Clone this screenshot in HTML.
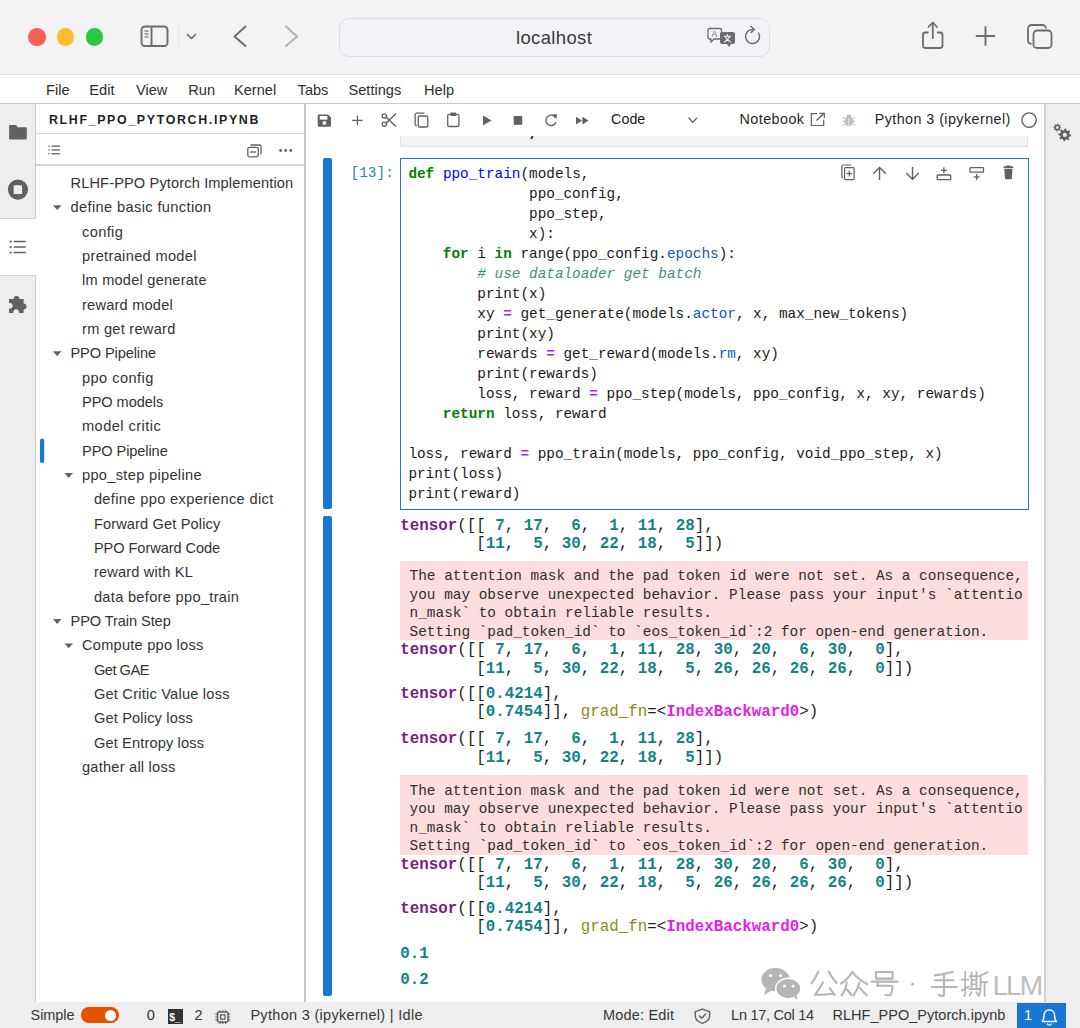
<!DOCTYPE html><html><head><meta charset="utf-8"><style>
*{margin:0;padding:0;box-sizing:border-box}
html,body{width:1080px;height:1028px;overflow:hidden;background:#fff;font-family:"Liberation Sans",sans-serif;color:#1f1f1f}
.a{position:absolute;white-space:pre}
svg{position:absolute;overflow:visible}
.m{font-family:"Liberation Mono",monospace}
.kw{color:#008000;font-weight:bold}
.fn{color:#0000ff}
.pr{color:#0d58b8}
.cm{color:#3f8f80;font-style:italic}
.op{color:#aa22ff;font-weight:bold}
.ten{color:#7d1a8a;font-weight:bold}
.n{color:#128383;font-weight:bold}
.gr{color:#8c8c10}
.mag{color:#e81ee8;font-weight:bold}
</style></head><body>
<div class="a" style="left:0;top:0;width:1080px;height:74px;background:#f3f3f6"></div>
<div class="a" style="left:0;top:73.8px;width:1080px;height:1.4px;background:#dcdce0"></div>
<div class="a" style="left:28.3px;top:28.3px;width:17.4px;height:17.4px;border-radius:50%;background:#fe5f57"></div>
<div class="a" style="left:57.0px;top:28.3px;width:17.4px;height:17.4px;border-radius:50%;background:#febc2e"></div>
<div class="a" style="left:85.7px;top:28.3px;width:17.4px;height:17.4px;border-radius:50%;background:#28c840"></div>
<svg style="left:0;top:0" width="1080" height="74"><rect x="141.5" y="26.5" width="26" height="19.5" rx="3.5" fill="none" stroke="#6c6c70" stroke-width="1.9"/><line x1="151.5" y1="26.5" x2="151.5" y2="46" stroke="#6c6c70" stroke-width="1.9"/><line x1="144.5" y1="31" x2="148.5" y2="31" stroke="#6c6c70" stroke-width="1.2"/><line x1="144.5" y1="34" x2="148.5" y2="34" stroke="#6c6c70" stroke-width="1.2"/><line x1="144.5" y1="37" x2="148.5" y2="37" stroke="#6c6c70" stroke-width="1.2"/><polyline points="187.5,34.5 191.5,38.5 195.5,34.5" fill="none" stroke="#6c6c70" stroke-width="1.7" stroke-linecap="round" stroke-linejoin="round"/><line x1="178.5" y1="24" x2="178.5" y2="52" stroke="#e7e7eb" stroke-width="1"/><polyline points="245.5,26.5 234.5,36.5 245.5,46" fill="none" stroke="#6c6c70" stroke-width="2" stroke-linecap="round" stroke-linejoin="round"/><polyline points="286,26.5 297,36.5 286,46" fill="none" stroke="#b4b4b8" stroke-width="2" stroke-linecap="round" stroke-linejoin="round"/><path d="M928.5,32.5 H925.5 A2.5,2.5 0 0 0 923,35 V45.5 A2.5,2.5 0 0 0 925.5,48 H940 A2.5,2.5 0 0 0 942.5,45.5 V35 A2.5,2.5 0 0 0 940,32.5 H937" fill="none" stroke="#6c6c70" stroke-width="1.8"/><line x1="932.8" y1="23" x2="932.8" y2="39" stroke="#6c6c70" stroke-width="1.8"/><polyline points="928.5,27 932.8,22.5 937,27" fill="none" stroke="#6c6c70" stroke-width="1.8" stroke-linecap="round" stroke-linejoin="round"/><line x1="985.5" y1="27" x2="985.5" y2="45" stroke="#6c6c70" stroke-width="1.9" stroke-linecap="round"/><line x1="976.5" y1="36" x2="994.5" y2="36" stroke="#6c6c70" stroke-width="1.9" stroke-linecap="round"/><path d="M1031.5,44 A3.5,3.5 0 0 1 1028,40.5 V28.5 A3.5,3.5 0 0 1 1031.5,25 H1042.5 A3.5,3.5 0 0 1 1046,28.5" fill="none" stroke="#6c6c70" stroke-width="1.8"/><rect x="1033.5" y="30.5" width="18" height="17.5" rx="3.5" fill="none" stroke="#6c6c70" stroke-width="1.8"/></svg>
<div class="a" style="left:338.5px;top:17.5px;width:431.5px;height:39px;border:1px solid #dcdce0;border-radius:10px;background:#f3f3f7"></div>
<div class="a" style="left:516.0px;top:28.09px;font-size:18.5px;line-height:20px;color:#3a3a3c;letter-spacing:.35px">localhost</div>
<svg style="left:0;top:0" width="1080" height="74"><path d="M709.5,28.5 H720 A1.5,1.5 0 0 1 721.5,30 V37.5 A1.5,1.5 0 0 1 720,39 H714 L711,42 V39 H709.5 A1.5,1.5 0 0 1 708,37.5 V30 A1.5,1.5 0 0 1 709.5,28.5 Z" fill="none" stroke="#6c6c70" stroke-width="1.3"/><text x="711.5" y="37" font-family="Liberation Sans" font-size="8.5" fill="#6c6c70">A</text><path d="M722,32 H733 A2,2 0 0 1 735,34 V42 A2,2 0 0 1 733,44 H731 L729,47 L727,44 H722 A2,2 0 0 1 720,42 V34 A2,2 0 0 1 722,32 Z" fill="#6c6c70"/><path d="M727.5,34.6 V36 M724.3,36.3 H730.7 M725.3,36.5 Q727,40.5 730.6,42 M729.7,36.5 Q728,40.5 724.4,42" fill="none" stroke="#f3f3f7" stroke-width="1.1" stroke-linecap="round"/><path d="M758.6,33 A7,7 0 1 1 752.5,29.5" fill="none" stroke="#6c6c70" stroke-width="1.5" stroke-linecap="round"/><polyline points="751,26.5 754.5,29.5 751,32.5" fill="none" stroke="#6c6c70" stroke-width="1.5" stroke-linecap="round" stroke-linejoin="round"/></svg>
<div class="a" style="left:0;top:75px;width:1080px;height:28px;background:#fff"></div>
<div class="a" style="left:0;top:102.6px;width:1080px;height:1.6px;background:#c8c8c8"></div>
<div class="a" style="left:46.0px;top:79.74px;font-size:14.6px;line-height:20px;color:#2e2e2e;">File</div>
<div class="a" style="left:89.3px;top:79.74px;font-size:14.6px;line-height:20px;color:#2e2e2e;">Edit</div>
<div class="a" style="left:136.0px;top:79.74px;font-size:14.6px;line-height:20px;color:#2e2e2e;">View</div>
<div class="a" style="left:188.3px;top:79.74px;font-size:14.6px;line-height:20px;color:#2e2e2e;">Run</div>
<div class="a" style="left:234.0px;top:79.74px;font-size:14.6px;line-height:20px;color:#2e2e2e;">Kernel</div>
<div class="a" style="left:297.6px;top:79.74px;font-size:14.6px;line-height:20px;color:#2e2e2e;">Tabs</div>
<div class="a" style="left:348.5px;top:79.74px;font-size:14.6px;line-height:20px;color:#2e2e2e;">Settings</div>
<div class="a" style="left:424.0px;top:79.74px;font-size:14.6px;line-height:20px;color:#2e2e2e;">Help</div>
<div class="a" style="left:0;top:104px;width:35px;height:898px;background:#eeeeee"></div>
<div class="a" style="left:35px;top:104px;width:1px;height:114px;background:#c9c9c9"></div>
<div class="a" style="left:35px;top:275px;width:1px;height:727px;background:#c9c9c9"></div>
<div class="a" style="left:0;top:218px;width:35px;height:57px;background:#fff"></div>
<div class="a" style="left:0;top:217.5px;width:36px;height:1px;background:#d0d0d0"></div>
<div class="a" style="left:0;top:275px;width:36px;height:1.2px;background:#cfcfcf"></div>
<svg style="left:0;top:0" width="40" height="330"><path d="M10.3,125.1 H15.6 A1,1 0 0 1 16.5,125.6 L17.6,127.3 H25.6 A1.2,1.2 0 0 1 26.8,128.5 V138.3 A1.2,1.2 0 0 1 25.6,139.5 H10.3 A1.2,1.2 0 0 1 9.1,138.3 V126.3 A1.2,1.2 0 0 1 10.3,125.1 Z" fill="#616161"/><circle cx="17.95" cy="189.6" r="10.1" fill="#616161"/><rect x="13.7" y="185.2" width="8.4" height="8.9" rx="0.6" fill="#eeeeee"/><circle cx="10.6" cy="241.6" r="1.15" fill="#616161"/><circle cx="10.6" cy="247.1" r="1.15" fill="#616161"/><circle cx="10.6" cy="252.6" r="1.15" fill="#616161"/><rect x="13.6" y="240.85" width="12.3" height="1.5" rx=".7" fill="#616161"/><rect x="13.6" y="246.35" width="12.3" height="1.5" rx=".7" fill="#616161"/><rect x="13.6" y="251.85" width="12.3" height="1.5" rx=".7" fill="#616161"/><path d="M9,299 H13.6 A2.9,2.9 0 1 1 19.4,299 H23.6 V303.6 A2.9,2.9 0 1 1 23.6,309.4 V313 H19 A2.9,2.9 0 1 0 13.4,313 H9 V308.6 A2.9,2.9 0 1 0 9,303 Z" fill="#616161"/></svg>
<div class="a" style="left:304.4px;top:104px;width:1.7px;height:898px;background:#c4c4c4"></div>
<div class="a" style="left:36px;top:132.9px;width:269px;height:1.5px;background:#d3d3d3"></div>
<div class="a" style="left:36px;top:164.2px;width:269px;height:1.5px;background:#d3d3d3"></div>
<div class="a" style="left:49.0px;top:109.70px;font-size:12.4px;line-height:20px;color:#1f1f1f;;letter-spacing:1.653px;font-weight:bold">RLHF_PPO_PYTORCH.IPYNB</div>
<svg style="left:0;top:0" width="310" height="170"><rect x="51.5" y="145.5" width="8.5" height="1.3" fill="#616161"/><rect x="51.5" y="149.3" width="8.5" height="1.3" fill="#616161"/><rect x="51.5" y="153.1" width="8.5" height="1.3" fill="#616161"/><rect x="48.3" y="145.5" width="1.3" height="1.3" fill="#616161"/><rect x="48.3" y="149.3" width="1.3" height="1.3" fill="#616161"/><rect x="48.3" y="153.1" width="1.3" height="1.3" fill="#616161"/><rect x="247.8" y="147.3" width="10.5" height="9.5" rx="1.5" fill="none" stroke="#616161" stroke-width="1.3"/><path d="M250.5,145 H259.5 A1.5,1.5 0 0 1 261,146.5 V154.5" fill="none" stroke="#616161" stroke-width="1.3"/><rect x="250" y="151.4" width="6" height="1.3" fill="#616161"/><circle cx="280.6" cy="150.5" r="1.4" fill="#616161"/><circle cx="285.7" cy="150.5" r="1.4" fill="#616161"/><circle cx="290.8" cy="150.5" r="1.4" fill="#616161"/></svg>
<div class="a" style="left:70.5px;top:172.94px;font-size:14.6px;line-height:20px;color:#333333;;letter-spacing:0.133px">RLHF-PPO Pytorch Implemention</div>
<div class="a" style="left:70.5px;top:197.28px;font-size:14.6px;line-height:20px;color:#333333;;letter-spacing:0.384px">define basic function</div>
<div class="a" style="left:82.0px;top:221.62px;font-size:14.6px;line-height:20px;color:#333333;;letter-spacing:0.368px">config</div>
<div class="a" style="left:82.0px;top:245.96px;font-size:14.6px;line-height:20px;color:#333333;;letter-spacing:0.332px">pretrained model</div>
<div class="a" style="left:82.0px;top:270.30px;font-size:14.6px;line-height:20px;color:#333333;;letter-spacing:0.227px">lm model generate</div>
<div class="a" style="left:82.0px;top:294.64px;font-size:14.6px;line-height:20px;color:#333333;;letter-spacing:0.213px">reward model</div>
<div class="a" style="left:82.0px;top:318.98px;font-size:14.6px;line-height:20px;color:#333333;;letter-spacing:0.270px">rm get reward</div>
<div class="a" style="left:70.5px;top:343.32px;font-size:14.6px;line-height:20px;color:#333333;;letter-spacing:-0.117px">PPO Pipeline</div>
<div class="a" style="left:82.0px;top:367.66px;font-size:14.6px;line-height:20px;color:#333333;;letter-spacing:0.436px">ppo config</div>
<div class="a" style="left:82.0px;top:392.00px;font-size:14.6px;line-height:20px;color:#333333;;letter-spacing:-0.073px">PPO models</div>
<div class="a" style="left:82.0px;top:416.34px;font-size:14.6px;line-height:20px;color:#333333;;letter-spacing:0.452px">model critic</div>
<div class="a" style="left:82.0px;top:440.68px;font-size:14.6px;line-height:20px;color:#333333;;letter-spacing:-0.095px">PPO Pipeline</div>
<div class="a" style="left:82.0px;top:465.02px;font-size:14.6px;line-height:20px;color:#333333;;letter-spacing:0.318px">ppo_step pipeline</div>
<div class="a" style="left:93.9px;top:489.36px;font-size:14.6px;line-height:20px;color:#333333;;letter-spacing:0.358px">define ppo experience dict</div>
<div class="a" style="left:93.9px;top:513.70px;font-size:14.6px;line-height:20px;color:#333333;;letter-spacing:0.133px">Forward Get Policy</div>
<div class="a" style="left:93.9px;top:538.04px;font-size:14.6px;line-height:20px;color:#333333;;letter-spacing:-0.067px">PPO Forward Code</div>
<div class="a" style="left:93.9px;top:562.38px;font-size:14.6px;line-height:20px;color:#333333;;letter-spacing:0.180px">reward with KL</div>
<div class="a" style="left:93.9px;top:586.72px;font-size:14.6px;line-height:20px;color:#333333;;letter-spacing:0.317px">data before ppo_train</div>
<div class="a" style="left:70.5px;top:611.06px;font-size:14.6px;line-height:20px;color:#333333;;letter-spacing:-0.088px">PPO Train Step</div>
<div class="a" style="left:82.0px;top:635.40px;font-size:14.6px;line-height:20px;color:#333333;;letter-spacing:0.241px">Compute ppo loss</div>
<div class="a" style="left:93.9px;top:659.74px;font-size:14.6px;line-height:20px;color:#333333;;letter-spacing:-0.462px">Get GAE</div>
<div class="a" style="left:93.9px;top:684.08px;font-size:14.6px;line-height:20px;color:#333333;;letter-spacing:0.224px">Get Critic Value loss</div>
<div class="a" style="left:93.9px;top:708.42px;font-size:14.6px;line-height:20px;color:#333333;;letter-spacing:0.167px">Get Policy loss</div>
<div class="a" style="left:93.9px;top:732.76px;font-size:14.6px;line-height:20px;color:#333333;;letter-spacing:0.148px">Get Entropy loss</div>
<div class="a" style="left:82.0px;top:757.10px;font-size:14.6px;line-height:20px;color:#333333;;letter-spacing:0.230px">gather all loss</div>
<svg style="left:0;top:0" width="310" height="800"><polygon points="52.9,205.2 61.5,205.2 57.2,210.1" fill="#616161"/><polygon points="52.9,351.3 61.5,351.3 57.2,356.2" fill="#616161"/><polygon points="64.4,473.0 73.0,473.0 68.7,477.9" fill="#616161"/><polygon points="52.9,619.0 61.5,619.0 57.2,623.9" fill="#616161"/><polygon points="64.4,643.4 73.0,643.4 68.7,648.3" fill="#616161"/><rect x="40" y="438.5" width="4.2" height="24.5" rx="2" fill="#1976d2"/></svg>
<div class="a" style="left:400px;top:130px;width:628px;height:16.8px;background:#f2f2f2;border:1px solid #e0e0e0;border-top:none"></div>
<div class="a" style="left:531px;top:135.5px;width:2px;height:2.5px;background:#333;transform:skewX(-20deg)"></div>
<div class="a" style="left:306px;top:104px;width:738px;height:31.5px;background:#fff"></div>
<svg style="left:0;top:0" width="1080" height="140"><path d="M319,114.6 H328.2 L331,117.4 V125.4 A1.3,1.3 0 0 1 329.7,126.7 H319 A1.3,1.3 0 0 1 317.7,125.4 V115.9 A1.3,1.3 0 0 1 319,114.6 Z" fill="#616161"/><rect x="319.8" y="116" width="7.6" height="3.6" fill="#fff"/><circle cx="324.4" cy="123" r="1.9" fill="#fff"/><line x1="357.4" y1="115.6" x2="357.4" y2="125.3" stroke="#616161" stroke-width="1.3"/><line x1="352.2" y1="120.4" x2="362.6" y2="120.4" stroke="#616161" stroke-width="1.3"/><circle cx="384.4" cy="115.9" r="2.1" fill="none" stroke="#616161" stroke-width="1.3"/><circle cx="384.4" cy="124.3" r="2.1" fill="none" stroke="#616161" stroke-width="1.3"/><line x1="386.2" y1="117.2" x2="396" y2="126.6" stroke="#616161" stroke-width="1.4"/><line x1="386.2" y1="123" x2="396" y2="113.5" stroke="#616161" stroke-width="1.4"/><path d="M416.8,125.5 A1.6,1.6 0 0 1 415.1,123.9 V114.8 A1.6,1.6 0 0 1 416.7,113.2 H424.5" fill="none" stroke="#616161" stroke-width="1.3"/><rect x="418.2" y="116" width="9.6" height="11" rx="1.4" fill="none" stroke="#616161" stroke-width="1.3"/><rect x="447.7" y="114.4" width="11.2" height="12.1" rx="1.3" fill="none" stroke="#616161" stroke-width="1.3"/><rect x="450.3" y="112.5" width="6" height="3.4" rx="0.8" fill="#616161"/><polygon points="483,115.6 491.5,120.45 483,125.3" fill="#616161"/><rect x="513.7" y="116" width="8.5" height="8.8" fill="#616161"/><path d="M555.5,117.6 A5.2,5.2 0 1 0 556,122" fill="none" stroke="#616161" stroke-width="1.4"/><polygon points="552.2,114.6 556.9,114.3 556.6,119" fill="#616161"/><polygon points="576,116.7 582,120.6 576,124.5" fill="#616161"/><polygon points="582.4,116.7 588.5,120.6 582.4,124.5" fill="#616161"/><polyline points="688.6,117.8 692.8,122.2 697,117.8" fill="none" stroke="#616161" stroke-width="1.3"/><path d="M817,113.7 H811.3 V125.5 H823.7 V119.8" fill="none" stroke="#616161" stroke-width="1.2"/><line x1="816.5" y1="120.5" x2="824.2" y2="113.3" stroke="#616161" stroke-width="1.2"/><polyline points="819.5,113.3 824.3,113.3 824.3,118" fill="none" stroke="#616161" stroke-width="1.2"/><ellipse cx="848.9" cy="121.3" rx="4.3" ry="5" fill="#bdbdbd"/><ellipse cx="848.9" cy="115.8" rx="2.6" ry="1.6" fill="#bdbdbd"/><path d="M842.6,117.5 L845,118.3 M842.6,121.3 H845 M842.6,125 L845,124.2 M855.2,117.5 L852.8,118.3 M855.2,121.3 H852.8 M855.2,125 L852.8,124.2" stroke="#bdbdbd" stroke-width="1.2"/><line x1="848.9" y1="118" x2="848.9" y2="126" stroke="#fff" stroke-width="0.7"/><circle cx="1029.1" cy="120.1" r="7.2" fill="none" stroke="#616161" stroke-width="1.4"/></svg>
<div class="a" style="left:611.1px;top:108.85px;font-size:14.3px;line-height:20px;color:#1a1a1a;;letter-spacing:0.004px">Code</div>
<div class="a" style="left:739.6px;top:109.15px;font-size:14.3px;line-height:20px;color:#1f1f1f;;letter-spacing:0.455px">Notebook</div>
<div class="a" style="left:874.7px;top:109.45px;font-size:14.3px;line-height:20px;color:#1f1f1f;;letter-spacing:0.449px">Python 3 (ipykernel)</div>
<div class="a" style="left:323px;top:157.8px;width:8.6px;height:351.6px;border-radius:2px;background:#1976d2"></div>
<div class="a" style="left:323px;top:516.3px;width:8.6px;height:479.6px;border-radius:2px;background:#1976d2"></div>
<div class="a m" style="left:350.6px;top:163.36px;font-size:14.4px;line-height:20px;color:#307fc1">[13]:</div>
<div class="a" style="left:400.1px;top:157.6px;width:628.6px;height:352.4px;border:1.4px solid #2574c4;background:#fff"></div>
<div class="a m" style="left:408.4px;top:163.77px;font-size:14.36px;line-height:20px;color:#1a1a1a"><span class="kw">def</span> <span class="fn">ppo_train</span>(models,
              ppo_config,
              ppo_step,
              x):
    <span class="kw">for</span> i <span class="kw">in</span> range(ppo_config.<span class="pr">epochs</span>):
        <span class="cm"># use dataloader get batch</span>
        print(x)
        xy <span class="op">=</span> get_generate(models.<span class="pr">actor</span>, x, max_new_tokens)
        print(xy)
        rewards <span class="op">=</span> get_reward(models.<span class="pr">rm</span>, xy)
        print(rewards)
        loss, reward <span class="op">=</span> ppo_step(models, ppo_config, x, xy, rewards)
    <span class="kw">return</span> loss, reward

loss, reward <span class="op">=</span> ppo_train(models, ppo_config, void_ppo_step, x)
print(loss)
print(reward)</div>
<svg style="left:0;top:0" width="1080" height="200"><path d="M843.3,178 A1.4,1.4 0 0 1 841.9,176.6 V166.4 A1.4,1.4 0 0 1 843.3,165 H851" fill="none" stroke="#616161" stroke-width="1.2"/><rect x="844.6" y="167.6" width="9.5" height="12" rx="1.2" fill="none" stroke="#616161" stroke-width="1.2"/><line x1="849.35" y1="170.8" x2="849.35" y2="176.4" stroke="#616161" stroke-width="1.2"/><line x1="846.6" y1="173.6" x2="852.1" y2="173.6" stroke="#616161" stroke-width="1.2"/><line x1="879.5" y1="167.5" x2="879.5" y2="180" stroke="#616161" stroke-width="1.4"/><polyline points="873.2,173.8 879.5,167.5 885.8,173.8" fill="none" stroke="#616161" stroke-width="1.4"/><line x1="912.5" y1="167" x2="912.5" y2="179.3" stroke="#616161" stroke-width="1.4"/><polyline points="906.2,173 912.5,179.3 918.8,173" fill="none" stroke="#616161" stroke-width="1.4"/><rect x="937.2" y="175" width="13.5" height="4.6" rx="0.8" fill="none" stroke="#616161" stroke-width="1.3"/><line x1="943.9" y1="167.3" x2="943.9" y2="173.2" stroke="#616161" stroke-width="1.3"/><line x1="941" y1="170.3" x2="946.8" y2="170.3" stroke="#616161" stroke-width="1.3"/><line x1="938" y1="173.1" x2="950" y2="173.1" stroke="#616161" stroke-width="0" /><rect x="970" y="167.6" width="13.5" height="4.6" rx="0.8" fill="none" stroke="#616161" stroke-width="1.3"/><line x1="976.7" y1="174" x2="976.7" y2="180" stroke="#616161" stroke-width="1.3"/><line x1="973.8" y1="177" x2="979.6" y2="177" stroke="#616161" stroke-width="1.3"/><rect x="1003.6" y="166.3" width="9.6" height="1.8" rx="0.5" fill="#616161"/><rect x="1006.2" y="165.4" width="4.4" height="1.5" rx="0.5" fill="#616161"/><path d="M1004.3,168.8 H1012.5 L1011.8,178.4 A1,1 0 0 1 1010.8,179.3 H1006 A1,1 0 0 1 1005,178.4 Z" fill="#616161"/></svg>
<div class="a m" style="left:400.3px;top:516.53px;font-size:15.83px;line-height:18.5px;color:#1f1f1f"><span class="ten">tensor</span>([[ <span class="n">7</span>, <span class="n">17</span>,  <span class="n">6</span>,  <span class="n">1</span>, <span class="n">11</span>, <span class="n">28</span>],
        [<span class="n">11</span>,  <span class="n">5</span>, <span class="n">30</span>, <span class="n">22</span>, <span class="n">18</span>,  <span class="n">5</span>]])</div>
<div class="a" style="left:400.3px;top:560.8px;width:627.7px;height:79.20000000000005px;background:#fddddd"></div>
<div class="a m" style="left:409.6px;top:567.19px;font-size:14.4px;line-height:18.55px;color:#2e2e2e">The attention mask and the pad token id were not set. As a consequence,
you may observe unexpected behavior. Please pass your input's `attentio
n_mask` to obtain reliable results.
Setting `pad_token_id` to `eos_token_id`:2 for open-end generation.</div>
<div class="a m" style="left:400.3px;top:641.13px;font-size:15.83px;line-height:18.5px;color:#1f1f1f"><span class="ten">tensor</span>([[ <span class="n">7</span>, <span class="n">17</span>,  <span class="n">6</span>,  <span class="n">1</span>, <span class="n">11</span>, <span class="n">28</span>, <span class="n">30</span>, <span class="n">20</span>,  <span class="n">6</span>, <span class="n">30</span>,  <span class="n">0</span>],
        [<span class="n">11</span>,  <span class="n">5</span>, <span class="n">30</span>, <span class="n">22</span>, <span class="n">18</span>,  <span class="n">5</span>, <span class="n">26</span>, <span class="n">26</span>, <span class="n">26</span>, <span class="n">26</span>,  <span class="n">0</span>]])</div>
<div class="a m" style="left:400.3px;top:684.93px;font-size:15.83px;line-height:18.5px;color:#1f1f1f"><span class="ten">tensor</span>([[<span class="n">0.4214</span>],
        [<span class="n">0.7454</span>]], <span class="gr">grad_fn</span>=&lt;<span class="mag">IndexBackward0</span>&gt;)</div>
<div class="a m" style="left:400.3px;top:730.13px;font-size:15.83px;line-height:18.5px;color:#1f1f1f"><span class="ten">tensor</span>([[ <span class="n">7</span>, <span class="n">17</span>,  <span class="n">6</span>,  <span class="n">1</span>, <span class="n">11</span>, <span class="n">28</span>],
        [<span class="n">11</span>,  <span class="n">5</span>, <span class="n">30</span>, <span class="n">22</span>, <span class="n">18</span>,  <span class="n">5</span>]])</div>
<div class="a" style="left:400.3px;top:775.2px;width:627.7px;height:79.59999999999991px;background:#fddddd"></div>
<div class="a m" style="left:409.6px;top:781.79px;font-size:14.4px;line-height:18.55px;color:#2e2e2e">The attention mask and the pad token id were not set. As a consequence,
you may observe unexpected behavior. Please pass your input's `attentio
n_mask` to obtain reliable results.
Setting `pad_token_id` to `eos_token_id`:2 for open-end generation.</div>
<div class="a m" style="left:400.3px;top:855.73px;font-size:15.83px;line-height:18.5px;color:#1f1f1f"><span class="ten">tensor</span>([[ <span class="n">7</span>, <span class="n">17</span>,  <span class="n">6</span>,  <span class="n">1</span>, <span class="n">11</span>, <span class="n">28</span>, <span class="n">30</span>, <span class="n">20</span>,  <span class="n">6</span>, <span class="n">30</span>,  <span class="n">0</span>],
        [<span class="n">11</span>,  <span class="n">5</span>, <span class="n">30</span>, <span class="n">22</span>, <span class="n">18</span>,  <span class="n">5</span>, <span class="n">26</span>, <span class="n">26</span>, <span class="n">26</span>, <span class="n">26</span>,  <span class="n">0</span>]])</div>
<div class="a m" style="left:400.3px;top:899.53px;font-size:15.83px;line-height:18.5px;color:#1f1f1f"><span class="ten">tensor</span>([[<span class="n">0.4214</span>],
        [<span class="n">0.7454</span>]], <span class="gr">grad_fn</span>=&lt;<span class="mag">IndexBackward0</span>&gt;)</div>
<div class="a m" style="left:400.3px;top:944.83px;font-size:15.83px;line-height:18.5px;color:#1f1f1f"><span class="n">0.1</span></div>
<div class="a m" style="left:400.3px;top:970.53px;font-size:15.83px;line-height:18.5px;color:#1f1f1f"><span class="n">0.2</span></div>
<div class="a" style="left:1043.9px;top:104px;width:1.8px;height:898px;background:#cfcfcf"></div>
<div class="a" style="left:1045.7px;top:104px;width:34.3px;height:898px;background:#eeeeee"></div>
<svg style="left:0;top:0" width="1080" height="200"><polygon points="1061.30,127.50 1061.22,128.28 1059.98,128.61 1059.71,129.11 1060.13,130.33 1059.52,130.83 1058.41,130.18 1057.87,130.34 1057.30,131.50 1056.52,131.42 1056.19,130.18 1055.69,129.91 1054.47,130.33 1053.97,129.72 1054.62,128.61 1054.46,128.07 1053.30,127.50 1053.38,126.72 1054.62,126.39 1054.89,125.89 1054.47,124.67 1055.08,124.17 1056.19,124.82 1056.73,124.66 1057.30,123.50 1058.08,123.58 1058.41,124.82 1058.91,125.09 1060.13,124.67 1060.63,125.28 1059.98,126.39 1060.14,126.93" fill="#616161"/><circle cx="1057.3" cy="127.5" r="1.4" fill="#eeeeee"/><polygon points="1071.20,134.90 1071.08,136.15 1069.14,136.70 1068.71,137.51 1069.33,139.43 1068.36,140.22 1066.60,139.24 1065.72,139.51 1064.80,141.30 1063.55,141.18 1063.00,139.24 1062.19,138.81 1060.27,139.43 1059.48,138.46 1060.46,136.70 1060.19,135.82 1058.40,134.90 1058.52,133.65 1060.46,133.10 1060.89,132.29 1060.27,130.37 1061.24,129.58 1063.00,130.56 1063.88,130.29 1064.80,128.50 1066.05,128.62 1066.60,130.56 1067.41,130.99 1069.33,130.37 1070.12,131.34 1069.14,133.10 1069.41,133.98" fill="#616161"/><circle cx="1064.8" cy="134.9" r="2.1" fill="#eeeeee"/></svg>
<div class="a" style="left:0;top:1002px;width:1080px;height:26px;background:#eeeeee"></div>
<div class="a" style="left:30.6px;top:1005.18px;font-size:14.5px;line-height:20px;color:#363636;;letter-spacing:-0.065px">Simple</div>
<div class="a" style="left:81.2px;top:1007.2px;width:37.8px;height:16.3px;border-radius:8.2px;background:#e65100"></div>
<div class="a" style="left:104.8px;top:1009.7px;width:11.2px;height:11.2px;border-radius:50%;background:#fff"></div>
<div class="a" style="left:146.8px;top:1004.78px;font-size:14.5px;line-height:20px;color:#363636;;letter-spacing:-0.664px">0</div>
<div class="a" style="left:194.5px;top:1004.78px;font-size:14.5px;line-height:20px;color:#363636;;letter-spacing:-0.664px">2</div>
<div class="a" style="left:167.6px;top:1008.7px;width:15.4px;height:15.8px;background:#333333"></div>
<div class="a" style="left:169.2px;top:1011px;font-size:10.5px;line-height:12px;color:#fff;font-weight:bold">$_</div>
<svg style="left:0;top:0" width="1080" height="1028"><rect x="217.6" y="1012" width="10.4" height="10" rx="1.2" fill="none" stroke="#616161" stroke-width="1.5"/><rect x="220.6" y="1014.9" width="4.4" height="4.2" fill="none" stroke="#616161" stroke-width="1.3"/><path d="M220,1010.2 V1012 M222.8,1010.2 V1012 M225.6,1010.2 V1012 M220,1022 V1024 M222.8,1022 V1024 M225.6,1022 V1024 M215.4,1014.2 H217.6 M215.4,1017 H217.6 M215.4,1019.8 H217.6 M228,1014.2 H230.2 M228,1017 H230.2 M228,1019.8 H230.2" stroke="#616161" stroke-width="1.2"/><path d="M702.4,1009.2 L709.6,1011.6 V1015.8 C709.6,1019.4 706.6,1022 702.4,1023.3 C698.2,1022 695.3,1019.4 695.3,1015.8 V1011.6 Z" fill="none" stroke="#616161" stroke-width="1.4" stroke-linejoin="round"/><polyline points="699.4,1016 701.7,1018.3 705.6,1014" fill="none" stroke="#616161" stroke-width="1.4" stroke-linecap="round" stroke-linejoin="round"/></svg>
<div class="a" style="left:250.4px;top:1005.18px;font-size:14.5px;line-height:20px;color:#363636;;letter-spacing:0.306px">Python 3 (ipykernel) | Idle</div>
<div class="a" style="left:602.9px;top:1004.98px;font-size:14.5px;line-height:20px;color:#363636;;letter-spacing:0.198px">Mode: Edit</div>
<div class="a" style="left:731.1px;top:1004.98px;font-size:14.5px;line-height:20px;color:#363636;;letter-spacing:-0.280px">Ln 17, Col 14</div>
<div class="a" style="left:832.5px;top:1004.98px;font-size:14.5px;line-height:20px;color:#363636;;letter-spacing:0.021px">RLHF_PPO_Pytorch.ipynb</div>
<div class="a" style="left:1017.4px;top:1002.6px;width:48.6px;height:25.4px;background:#1976d2"></div>
<div class="a" style="left:1024.1px;top:1004.98px;font-size:14.5px;line-height:20px;color:#ffffff;;letter-spacing:-1.564px">1</div>
<svg style="left:0;top:0" width="1080" height="1028"><path d="M1042.3,1021.6 C1043.6,1020 1043.9,1018.4 1043.9,1016 C1043.9,1012.2 1046.3,1009.9 1049.3,1009.9 C1052.3,1009.9 1054.7,1012.2 1054.7,1016 C1054.7,1018.4 1055,1020 1056.3,1021.6 Z" fill="none" stroke="#fff" stroke-width="1.5" stroke-linejoin="round"/><path d="M1047.2,1023.6 A2.2,2.2 0 0 0 1051.4,1023.6" fill="none" stroke="#fff" stroke-width="1.4"/></svg>
<svg style="left:0;top:0" width="1080" height="1028"><ellipse cx="775.5" cy="979.6" rx="14.2" ry="11.6" fill="#b5b5b5"/><polygon points="766,988 764,995 772,990.5" fill="#b5b5b5"/><ellipse cx="788.3" cy="988.6" rx="12.6" ry="10.4" fill="#b5b5b5" stroke="#fff" stroke-width="1.6"/><polygon points="794,997 797.5,1000 796.5,995" fill="#b5b5b5"/><circle cx="770.5" cy="975.5" r="1.6" fill="#fff"/><circle cx="780.5" cy="975.5" r="1.6" fill="#fff"/><circle cx="784.5" cy="986.2" r="1.4" fill="#fff"/><circle cx="793" cy="986.2" r="1.4" fill="#fff"/><path transform="translate(810.6,971)" d="M7.6,0.8 Q5,7 0.8,12.4 M18,0.6 Q21.5,7 26,12 M12.3,11.5 Q9,18 4.2,24 Q14,23.6 23.2,22.8 M19.2,17.4 L24.2,24.2" fill="none" stroke="#b5b5b5" stroke-width="2.1" stroke-linecap="round" stroke-linejoin="round"/><path transform="translate(840.4,971)" d="M11.8,0.8 Q8,8 0.6,12.6 M11.8,0.8 Q17,8 26.8,13 M6.4,11.5 Q5.5,19 1,24.5 M6.8,18.5 L11,24 M19.2,11.5 Q17,19 13,24.5 M19.4,17 L26.4,24.5" fill="none" stroke="#b5b5b5" stroke-width="2.1" stroke-linecap="round" stroke-linejoin="round"/><path transform="translate(871,971)" d="M5,1 H21.6 V7.6 H5 Z M0.6,10.6 H26.6 M7.4,10.8 L6.2,14.8 H21.4 Q21.4,21 19.5,24 Q17.5,24.6 14.5,24" fill="none" stroke="#b5b5b5" stroke-width="2.1" stroke-linecap="round" stroke-linejoin="round"/><circle cx="912.6" cy="984.2" r="1.4" fill="#b5b5b5"/><path transform="translate(931.3,971)" d="M21.5,0.8 Q12,3.8 3.5,4.4 M3.5,9.2 H22.2 M0.6,16 H25.6 M12.6,4.4 V23.6 Q12.6,25 10.8,25 L7.5,24" fill="none" stroke="#b5b5b5" stroke-width="2.1" stroke-linecap="round" stroke-linejoin="round"/><path transform="translate(961,971)" d="M0.5,8.6 H7.3 M4.2,1 V23.6 Q4.2,25 2.8,24.8 M0.6,19.8 L7.6,15.4 M8.8,5.2 H17.8 M10.5,1.5 V18 M15.5,1.5 V18 M10.5,9.2 H15.5 M10.5,13.3 H15.5 M8.5,18 H18 M10.5,21 L8.6,24.6 M15.4,21 L17.5,24.6 M26.4,1.2 Q23,3.4 19.6,4.2 V14 Q19.6,21 17.8,25 M19.6,11.2 H26.6 M23.6,11.2 V25" fill="none" stroke="#b5b5b5" stroke-width="1.8" stroke-linecap="round" stroke-linejoin="round"/></svg>
<div class="a" style="left:992.4px;top:974.83px;font-size:28.2px;line-height:20px;color:#bdbdbd;;letter-spacing:-1.980px">LLM</div>
<div class="a" style="left:1043.9px;top:960px;width:1.8px;height:42px;background:#cfcfcf"></div>
<div class="a" style="left:1045.7px;top:960px;width:34.3px;height:42px;background:#eeeeee"></div>
</body></html>
